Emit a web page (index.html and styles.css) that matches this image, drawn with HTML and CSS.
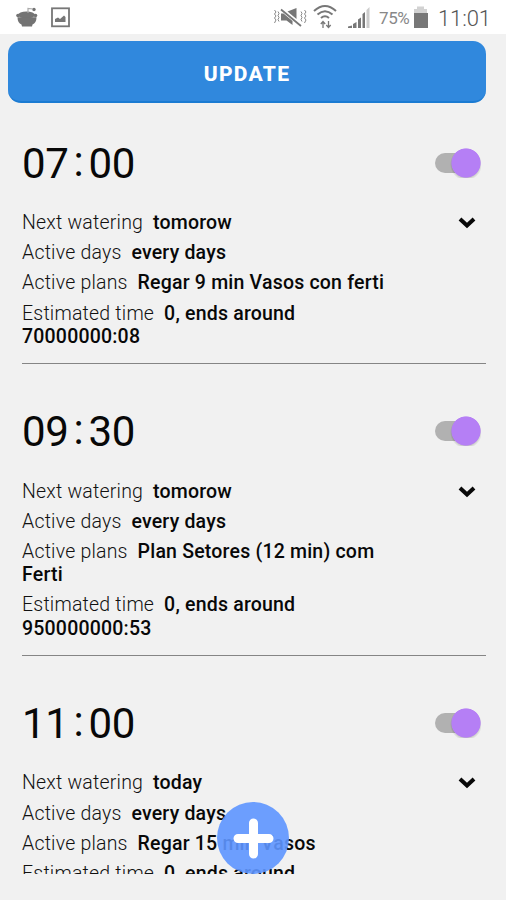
FILE: index.html
```html
<!DOCTYPE html>
<html lang="en">
<head>
<meta charset="utf-8">
<title>Watering plans</title>
<link rel="stylesheet" href="styles.css">
</head>
<body>
<header class="status">
  <svg class="left" width="90" height="34" viewBox="0 0 90 34">
    <g fill="#737373"><ellipse cx="26.500" cy="15" rx="8.500" ry="3.500"/><path d="M17.500 17.200h19c0 4-1.500 6-4 7.200l-.5 2h-10l-.5-2c-2.500-1.200-4-3.200-4-7.200z"/><circle cx="18" cy="15.500" r="1.800"/><circle cx="35.500" cy="15.500" r="1.800"/><circle cx="34" cy="9.500" r="1.700"/></g>
    <path d="M28 13V8.500l5 .5" fill="none" stroke="#aaa" stroke-width="1.200"/>
    <rect x="52" y="8.300" width="17" height="18" fill="none" stroke="#777" stroke-width="1.800"/>
    <path d="M55 22v-3l3-1.500 2 1.500 4-3.500 1.500 1.500v5z" fill="#777"/>
  </svg>
  <svg class="signals" width="105" height="34" viewBox="270 0 105 34">
    <g fill="none" stroke="#777" stroke-width="1.500">
      <path d="M274.500 10l1.500 2-1.500 2 1.500 2-1.500 2 1.500 2-1.500 3M278 11.500l1 2-1 2 1 2-1 2 1 2M301 11.500l1 2-1 2 1 2-1 2 1 2M304.500 10l1.500 2-1.500 2 1.500 2-1.500 2 1.500 2-1.500 3" stroke-width="1" stroke="#888"/>
      <path d="M281 9.500l20 16.500" stroke-width="1.800"/>
      <path d="M314 11q11-10 22 0M317.500 14.500q7.500-6.500 15 0M321 18q4-3.500 8 0" stroke-width="2"/>
      <path d="M323 28v-6M320.800 24l2.200-2.500 2.200 2.500M328.500 21v6M326.300 25l2.200 2.500 2.200-2.500" stroke-width="1.300"/>
    </g>
    <path d="M281 13.500h2.500l9 7.500v4l-6-4.500H281zM287.500 11.500l9-3.500v11z" fill="#777"/>
    <g fill="#777"><path d="M348 28v-1.500l4-1v2.500zM353 28v-4l3.500-2v6zM358 28v-8.500l3-2V28z"/><path d="M362.500 28V14l2.500-2v16z"/><path d="M366.500 28V10l3-3v21z" fill="#ccc"/></g>
  </svg>
  <span class="percent">75%</span>
  <svg class="battery" width="16" height="34" viewBox="0 0 16 34"><path d="M1 9h3V6.500h7V9h3v4H1z" fill="#d2d2d2"/><path d="M1 13h14v15H1z" fill="#777"/></svg>
  <span class="clock">11:01</span>
</header>
<main class="list">
  <button class="update">UPDATE</button>
  <section class="item">
    <div class="head"><h2><span>07</span><span class="colon">:</span><span>00</span></h2><span class="switch"></span></div>
    <div class="body">
      <div class="info">
        <p>Next watering <b>tomorow</b></p>
        <p>Active days <b>every days</b></p>
        <p>Active plans <b>Regar 9 min Vasos con ferti</b></p>
        <p>Estimated time <b>0, ends around 70000000:08</b></p>
      </div>
      <svg class="chevron" width="18" height="12" viewBox="0 0 18 12"><path d="M2 2l7 6.500L16 2"/></svg>
    </div>
  </section>
  <section class="item">
    <div class="head"><h2><span>09</span><span class="colon">:</span><span>30</span></h2><span class="switch"></span></div>
    <div class="body">
      <div class="info">
        <p>Next watering <b>tomorow</b></p>
        <p>Active days <b>every days</b></p>
        <p>Active plans <b>Plan Setores (12 min) com Ferti</b></p>
        <p>Estimated time <b>0, ends around 950000000:53</b></p>
      </div>
      <svg class="chevron" width="18" height="12" viewBox="0 0 18 12"><path d="M2 2l7 6.500L16 2"/></svg>
    </div>
  </section>
  <section class="item">
    <div class="head"><h2><span>11</span><span class="colon">:</span><span>00</span></h2><span class="switch"></span></div>
    <div class="body">
      <div class="info">
        <p>Next watering <b>today</b></p>
        <p>Active days <b>every days</b></p>
        <p>Active plans <b>Regar 15 min Vasos</b></p>
        <p>Estimated time <b>0, ends around</b></p>
      </div>
      <svg class="chevron" width="18" height="12" viewBox="0 0 18 12"><path d="M2 2l7 6.500L16 2"/></svg>
    </div>
  </section>
</main>
<button class="add" aria-label="Add"><svg width="72" height="72" viewBox="0 0 72 72"><path d="M36.500 21v31M21 36.500h31"/></svg></button>
</body>
</html>
```
FILE: styles.css
```css
* { box-sizing: border-box; }
body {
  margin: 0;
  height: 900px;
  overflow: hidden;
  background: #f1f1f1;
  color: #080808;
  font-family: Roboto, sans-serif;
}
.status {
  height: 34px;
  display: flex;
  align-items: center;
  background: #fff;
  color: #777;
}
.signals { margin-left: 180px; }
.percent { width: 38px; padding: 2px 0 0 4px; font-size: 17px; letter-spacing: -.4px; color: #888; }
.clock { margin-left: 9px; padding-top: 2px; font-size: 22px; font-weight: 300; letter-spacing: -.1px; color: #555; }
.list {
  height: 840px;
  padding: 7px 20px 0 22px;
  overflow: hidden;
}
.update {
  display: block;
  width: 478px;
  height: 62px;
  margin: 0 0 0 -14px;
  padding: 5px 0 0;
  border: 0;
  border-bottom: 2px solid #1b7bd2;
  border-radius: 13px;
  background: #3088dd;
  color: #fff;
  font: 800 21px Roboto, sans-serif;
  letter-spacing: 1.3px;
}
.item { padding-top: 32px; border-bottom: 1px solid #858585; }
.item + .item { padding-top: 39.500px; }
.head { display: flex; justify-content: space-between; align-items: center; height: 56px; }
.head h2 { display: flex; margin: 0; padding-top: 1px; font-size: 42px; font-weight: 400; line-height: 56px; letter-spacing: -.3px; }
.colon { margin: -2px 5px 0; }
.switch {
  width: 46px;
  height: 30px;
  margin: -1px 5px 0 0;
  background:
    radial-gradient(circle at 31px 15px, #b57ff5 14.200px, transparent 15px),
    radial-gradient(circle at 31px 16.500px, #0004 12px, transparent 16px);
  position: relative;
}
.switch::before {
  content: "";
  position: absolute;
  z-index: -1;
  left: 0;
  top: 5px;
  width: 40px;
  height: 20px;
  border-radius: 10px;
  background: #b1b1b1;
}
.body { display: flex; justify-content: space-between; padding: 20px 10px 8px 0; }
.info { width: 376px; }
.info p { margin: 0 0 6.900px; font-size: 19.500px; font-weight: 300; line-height: 23.300px; letter-spacing: .2px; color: #111; }
.info b { margin-left: 5px; font-weight: 500; color: #080808; }
.chevron { margin-top: 6px; fill: none; stroke: #080808; stroke-width: 4; }
.add {
  position: absolute;
  left: 217px;
  top: 802px;
  width: 72px;
  height: 72px;
  padding: 0;
  border: 0;
  border-radius: 50%;
  background: #5e96ffe8;
}
.add svg { display: block; stroke: #fff; stroke-width: 9; stroke-linecap: round; }
```
